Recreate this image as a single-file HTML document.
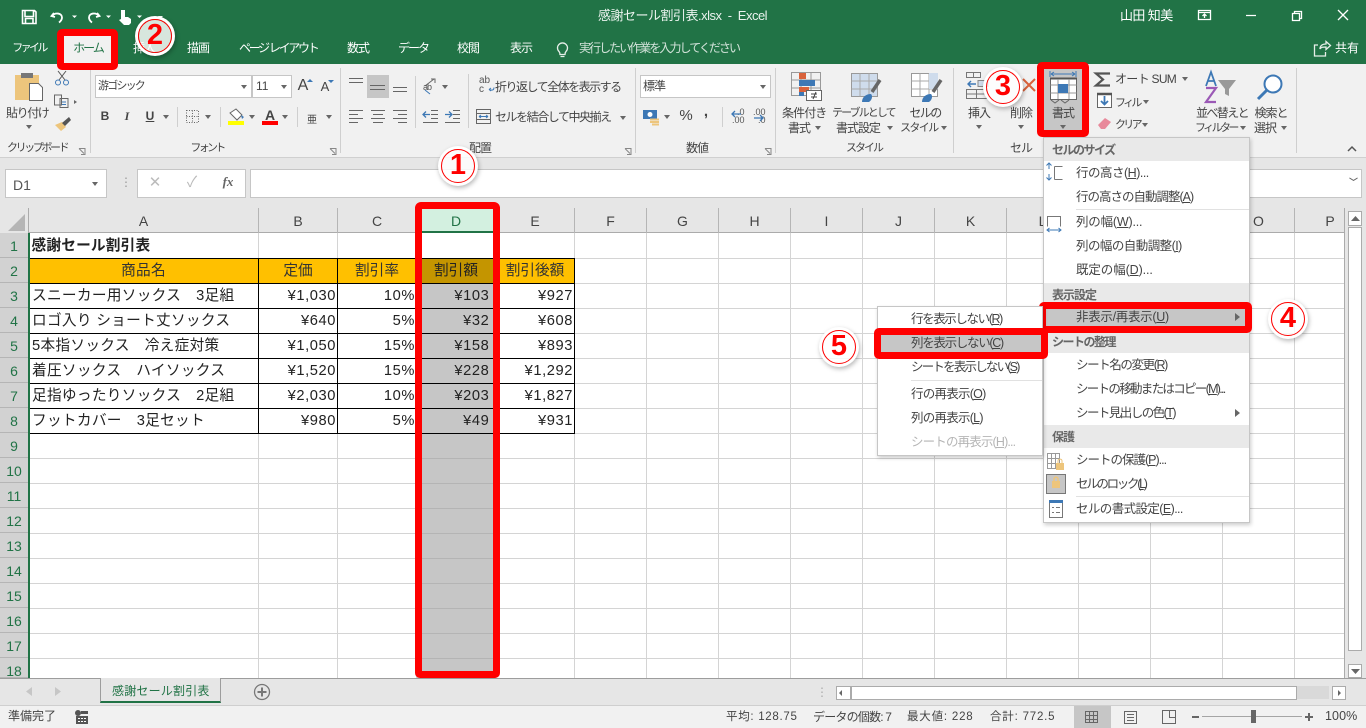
<!DOCTYPE html>
<html lang="ja"><head><meta charset="utf-8"><title>感謝セール割引表.xlsx - Excel</title>
<style>
html,body{margin:0;padding:0;width:1366px;height:728px;overflow:hidden;background:#e6e6e6}
body{position:relative;font-family:"Liberation Sans","Noto Sans CJK JP",sans-serif;font-size:12px;color:#444}
div,span,svg,table{position:absolute}
td span,u{position:static}
.t{white-space:nowrap;line-height:16px;letter-spacing:-1px}
.n{font-size:11px;letter-spacing:-2.6px}
.w{color:#fff}
.c{transform:translateX(-50%)}
.box{background:#fff;border:1px solid #c6c6c6;box-sizing:border-box}
.sep{width:1px;background:#cfcfcf}
.tri{width:0;height:0;border-left:3.5px solid transparent;border-right:3.5px solid transparent;border-top:4px solid #666}
.hd{left:1044px;width:205px;background:#e9e9e9;height:23px}
.mi{color:#444;font-size:12.5px}
.ch{top:208px;height:25px;line-height:26px;text-align:center;font-size:14px;color:#444;border-right:1px solid #b5b5b5;box-sizing:border-box}
.rh{left:0;width:28px;height:25px;line-height:26px;text-align:center;font-size:14px;color:#217346;background:#d2d2d2;border-bottom:1px solid #b5b5b5;box-sizing:border-box}
.red{border:7px solid #f00;border-radius:5px;box-sizing:border-box}
.num{width:34px;height:34px;border-radius:50%;border:1.5px solid #f00;box-sizing:border-box;background:rgba(255,255,255,.82);box-shadow:0 0 0 3px #fff,1px 2px 5px 3px rgba(0,0,0,.28);color:#f00;font-weight:bold;font-size:29px;line-height:31px;text-align:center}
table{left:28px;top:234px;border-collapse:collapse;table-layout:fixed;width:546px;font-size:14.67px;color:#222}
td{height:24px;padding:0 1px 0 3px;border:1px solid #000;white-space:nowrap;overflow:hidden;line-height:20px}
td:first-child{letter-spacing:.3px}
td.r{text-align:right;letter-spacing:.6px}
td.h{background:#ffc000;text-align:center;color:#333;padding:0}
td.g{background:#c6c6c6}
td.gh{background:#c49500;text-align:center;color:#222;padding:0}
</style></head><body>

<!-- title + tabs -->
<div style="left:0;top:0;width:1366px;height:64px;background:#217346"></div>
<span class="t w" style="left:598px;top:8px;font-size:13px;letter-spacing:-.5px;color:#eaf3ee">感謝セール割引表.xlsx&nbsp; -&nbsp; Excel</span>
<span class="t w" style="left:1120px;top:8px;font-size:13px;letter-spacing:-.6px">山田 知美</span>
<span class="t w c n" style="left:29px;top:40px">ファイル</span>
<div style="left:60px;top:34px;width:55px;height:30px;background:#f1f1f1"></div>
<span class="t c" style="left:88px;top:40px;color:#217346;letter-spacing:-2px">ホーム</span>
<span class="t w c" style="left:144px;top:40px">挿入</span>
<span class="t w c" style="left:198px;top:40px">描画</span>
<span class="t w" style="left:239px;top:40px;letter-spacing:-2.3px">ページ レイアウト</span>
<span class="t w c" style="left:358px;top:40px">数式</span>
<span class="t w" style="left:398px;top:40px;letter-spacing:-2px">データ</span>
<span class="t w c" style="left:468px;top:40px">校閲</span>
<span class="t w c" style="left:521px;top:40px">表示</span>
<span class="t" style="left:579px;top:40px;color:#d3e3da;letter-spacing:-1.95px">実行したい作業を入力してください</span>
<span class="t w" style="left:1335px;top:40px;letter-spacing:0">共有</span>
<svg style="left:0;top:0" width="1366" height="64" fill="none" stroke="#fff" stroke-width="1.3">
<path d="M22.5 10.5h12l1.5 1.5v11.5h-13.5zM25 10.5v6h8.5v-6M25.5 23v-4.500h7.500V23" stroke-width="1.600"/>
<path d="M54 13l-2.500 3 3.500 1M52 16c3-4 10-3 10 1.500 0 2-1 3.500-3 5" stroke-width="1.800"/>
<path d="M72 15.500h5l-2.500 2.500z" fill="#fff" stroke="none"/>
<path d="M97 13l2.500 3-3.500 1M99 16c-3-4-10-3-10 1.500 0 2 1 3.500 3 5" stroke-width="1.800"/>
<path d="M106 15.500h5l-2.500 2.500z" fill="#fff" stroke="none"/>
<path d="M121 10h4v7h3l3 2v4l-2 2h-5l-5-5 2-1z" fill="#fff" stroke="none"/>
<path d="M137 15.500h5l-2.500 2.500zM158 13.500h5M158 16h5l-2.500 2.500z" fill="#fff" stroke="none"/>
<path d="M1198.500 10.500h12v9h-12zM1198.500 12.500h12M1204.500 18v-4M1202.500 16l2-2 2 2"/>
<path d="M1246 15.500h10M1292.500 13.500h7v7h-7zM1294.500 13.500v-2h7v7h-2"/>
<path d="M1338 10l10 10M1348 10l-10 10"/>
<path d="M566 51.500a5 5 0 1 0-7 0c1 1 1 2 1 3h5c0-1 0-2 1-3zM560.500 56.500h4" stroke="#e7efe9"/>
<path d="M1318 45h-3.500v11h11v-4M1320 49c0-3 2-5 6-5v-2.500l4.500 4-4.500 4V47c-3 0-5 0-6 2z" stroke="#e7efe9"/>
</svg>

<!-- ribbon -->
<div style="left:0;top:64px;width:1366px;height:93px;background:#f1f1f1;border-bottom:1px solid #d0d0d0"></div>
<div class="sep" style="left:90px;top:68px;height:85px"></div>
<div class="sep" style="left:340px;top:68px;height:85px"></div>
<div class="sep" style="left:635px;top:68px;height:85px"></div>
<div class="sep" style="left:775px;top:68px;height:85px"></div>
<div class="sep" style="left:953px;top:68px;height:85px"></div>
<div class="sep" style="left:1296px;top:68px;height:85px"></div>
<div class="sep" style="left:177px;top:107px;height:20px"></div>
<div class="sep" style="left:220px;top:107px;height:20px"></div>
<div class="sep" style="left:297px;top:107px;height:20px"></div>
<div class="sep" style="left:415px;top:76px;height:52px"></div>
<div class="sep" style="left:468px;top:74px;height:54px"></div>
<div class="sep" style="left:722px;top:107px;height:20px"></div>

<span class="t" style="left:6px;top:105px;letter-spacing:-1.4px">貼り付け</span>
<div class="tri" style="left:26px;top:125px"></div>
<span class="t n" style="left:7px;top:140px;letter-spacing:-2.4px">クリップボード</span>
<span class="t c n" style="left:207px;top:140px;letter-spacing:-2.7px">フォント</span>
<span class="t c" style="left:480px;top:140px">配置</span>
<span class="t c" style="left:697px;top:140px">数値</span>
<span class="t c n" style="left:864px;top:140px;letter-spacing:-2px">スタイル</span>
<span class="t c" style="left:1021px;top:140px">セル</span>

<div class="box" style="left:95px;top:75px;width:157px;height:23px"></div>
<span class="t n" style="left:98px;top:78px;letter-spacing:-1.8px">游ゴシック</span>
<div class="tri" style="left:241px;top:85px"></div>
<div class="box" style="left:252px;top:75px;width:40px;height:23px"></div>
<span class="t" style="left:256px;top:78px;letter-spacing:0">11</span>
<div class="tri" style="left:281px;top:85px"></div>
<span class="t c" style="left:303px;top:78px;font-size:16px;letter-spacing:0">A</span>
<span class="t c" style="left:325px;top:79px;font-size:13px;letter-spacing:0">A</span>
<span class="t c" style="left:105px;top:108px;font-weight:bold;letter-spacing:0">B</span>
<span class="t c" style="left:127px;top:108px;font-style:italic;font-family:'Liberation Serif',serif;font-weight:bold;letter-spacing:0">I</span>
<span class="t c" style="left:150px;top:108px;font-weight:bold;letter-spacing:0"><u>U</u></span>
<div class="tri" style="left:163px;top:115px"></div>
<div class="tri" style="left:205px;top:115px"></div>
<div class="tri" style="left:249px;top:115px"></div>
<div class="tri" style="left:282px;top:115px"></div>
<div class="tri" style="left:326px;top:115px"></div>
<div style="left:228px;top:121px;width:16px;height:4px;background:#ff0"></div>
<div style="left:262px;top:121px;width:16px;height:4px;background:#f00"></div>
<span class="t c" style="left:270px;top:107px;font-weight:bold;font-size:14px;letter-spacing:0">A</span>
<span class="t c" style="left:312px;top:113px;font-size:10px;letter-spacing:0">亜</span>

<div style="left:367px;top:75px;width:22px;height:23px;background:#c6c6c6"></div>
<div class="tri" style="left:442px;top:85px"></div>
<span class="t" style="left:495px;top:79px;letter-spacing:-1.5px">折り返して全体を表示する</span>
<span class="t" style="left:495px;top:109px;letter-spacing:-1.45px">セルを結合して中央揃え</span>
<div class="tri" style="left:620px;top:116px"></div>

<div class="box" style="left:640px;top:75px;width:131px;height:23px"></div>
<span class="t" style="left:643px;top:78px">標準</span>
<div class="tri" style="left:760px;top:85px"></div>
<div class="tri" style="left:664px;top:115px"></div>
<span class="t c" style="left:686px;top:108px;font-size:15px;letter-spacing:0">%</span>
<span class="t c" style="left:706px;top:104px;font-size:15px;font-weight:bold;letter-spacing:0">,</span>
<span class="t" style="left:732px;top:108px;font-size:9px;line-height:8px;letter-spacing:0;width:20px;color:#555">&nbsp;&nbsp;.0<br>.00</span>
<span class="t" style="left:753px;top:108px;font-size:9px;line-height:8px;letter-spacing:0;width:20px;color:#555">.00<br>&nbsp;&nbsp;.0</span>

<span class="t" style="left:782px;top:105px;letter-spacing:-.9px">条件付き</span>
<span class="t" style="left:788px;top:120px">書式</span><div class="tri" style="left:815px;top:126px"></div>
<span class="t n" style="left:832px;top:105px;letter-spacing:-1.9px">テーブルとして</span>
<span class="t" style="left:836px;top:120px">書式設定</span><div class="tri" style="left:887px;top:126px"></div>
<span class="t c" style="left:925px;top:105px;letter-spacing:-1.6px">セルの</span>
<span class="t n" style="left:900px;top:120px;letter-spacing:-1.6px">スタイル</span><div class="tri" style="left:941px;top:126px"></div>

<span class="t c" style="left:979px;top:105px">挿入</span><div class="tri" style="left:976px;top:125px"></div>
<span class="t c" style="left:1021px;top:105px">削除</span><div class="tri" style="left:1018px;top:125px"></div>
<div style="left:1044px;top:69px;width:38px;height:61px;background:#c6c6c6"></div>
<span class="t c" style="left:1063px;top:105px">書式</span><div class="tri" style="left:1060px;top:125px"></div>
<span class="t" style="left:1115px;top:71px;letter-spacing:-.7px">オート SUM</span><div class="tri" style="left:1182px;top:77px"></div>
<span class="t n" style="left:1115px;top:95px;letter-spacing:-2.7px">フィル</span><div class="tri" style="left:1143px;top:100px"></div>
<span class="t n" style="left:1115px;top:117px;letter-spacing:-2.7px">クリア</span><div class="tri" style="left:1142px;top:123px"></div>
<span class="t" style="left:1196px;top:105px;letter-spacing:-1.6px">並べ替えと</span>
<span class="t n" style="left:1195px;top:120px;letter-spacing:-2.6px">フィルター</span><div class="tri" style="left:1240px;top:126px"></div>
<span class="t c" style="left:1271px;top:105px">検索と</span>
<span class="t" style="left:1254px;top:120px">選択</span><div class="tri" style="left:1281px;top:126px"></div>

<svg style="left:0;top:64px" width="1366" height="94" fill="none" stroke="#666" stroke-width="1">
<g transform="translate(0,-64)">
<!-- clipboard -->
<path d="M15 75h24v25H15z" fill="#edc57c" stroke="none"/><path d="M21 73h12v5H21z" fill="#777" stroke="none"/>
<path d="M29.500 83.500h9l4 4v13h-13z" fill="#fff"/>
<path d="M58 71l7 9M66 71l-7 9" stroke="#555"/><circle cx="58" cy="82.500" r="2.500" stroke="#3d78b5"/><circle cx="66" cy="82.500" r="2.500" stroke="#3d78b5"/>
<path d="M54.500 95h7v10h-7zM60 98.500h8v9h-8z" fill="#f1f1f1"/><path d="M62 102h4M62 104.500h4" stroke="#3d78b5"/>
<path d="M74 100l3 2-3 2z" fill="#666" stroke="none"/>
<path d="M55 125l7-3 4 5-5 4z" fill="#edc57c" stroke="none"/><path d="M62 123l7-6 2 3-6 6z" fill="#555" stroke="none"/>
<path d="M79 148.500h6v6M81 154.500h4v-4M79 148.500l5 5" stroke="#888"/>
<path d="M330 148.500h6v6M332 154.500h4v-4M330 148.500l5 5" stroke="#888"/>
<path d="M625 148.500h6v6M627 154.500h4v-4M625 148.500l5 5" stroke="#888"/>
<path d="M765 148.500h6v6M767 154.500h4v-4M765 148.500l5 5" stroke="#888"/>
<!-- grow/shrink -->
<path d="M307 82l3-3 3 3z" fill="#3d78b5" stroke="none"/><path d="M328 80h6l-3 3z" fill="#3d78b5" stroke="none"/>
<!-- borders -->
<path d="M186.500 110.500h12v12h-12zM192.500 110.500v12M186.500 116.500h12" stroke-dasharray="1 1.500"/>
<!-- fill -->
<path d="M230 113l6-4 6 6-5 5z" fill="#fff"/><path d="M241 115l3 2-2 2z" fill="#3d78b5" stroke="none"/>
<!-- align -->
<path d="M349 78.500h14M349 82.500h14M370 85.500h15M370 89.500h15M393 87.500h14M393 91.500h14"/>
<path d="M349 110.500h14M349 114.500h9M349 118.500h14M349 122.500h9M371 110.500h14M373 114.500h10M371 118.500h14M373 122.500h10M393 110.500h14M398 114.500h9M393 118.500h14M398 122.500h9"/>
<path d="M425 86l9-7M431 79h4v4"/><path d="M425 90l5 4" stroke="#3d78b5"/>
<path d="M431 110.500h7M431 114.500h7M431 118.500h7M423 122.500h15M453 110.500h7M453 114.500h7M453 118.500h7M445 122.500h15" />
<path d="M423 114.500h7M426 111.500l-3 3 3 3M445 114.500h7M449 111.500l3 3-3 3" stroke="#3d78b5" stroke-width="1.300"/>
<!-- abc / merge -->
<path d="M489 89.500c4 1.500 5 0 5-2M489 89.500l2-1.500M489 89.500l2 1.500" stroke="#3d78b5"/>
<path d="M476.500 109.500h14v14h-14zM476.500 113.500h14M476.500 119.500h14" /><path d="M479 116.500h9M479 116.500l2-1.500M479 116.500l2 1.500M488 116.500l-2-1.500M488 116.500l-2 1.500" stroke="#3d78b5"/>
<!-- currency -->
<path d="M643 110h14v9h-14z" fill="#3d78b5" stroke="none"/><circle cx="650" cy="114.500" r="2.500" fill="#fff" stroke="none"/>
<path d="M650 119.500h9M650 122h9M652 124.500h7" stroke="#edc57c" stroke-width="2"/>
<path d="M732 114h9M735 111l-3 3 3 3M754 118h9M760 115l3 3-3 3" stroke="#3d78b5" stroke-width="1.300"/>
<!-- cond -->
<path d="M791.500 72.500h29v23h-29zM801 72.500v23M811 72.500v23M791.500 80h29M791.500 88h29" stroke="#999"/>
<path d="M799 73h7v6h-7z" fill="#d9623b" stroke="none"/><path d="M799 80h16v6h-16z" fill="#3d78b5" stroke="none"/><path d="M799 87h10v5h-10z" fill="#d9623b" stroke="none"/><path d="M799 92h5v4h-5z" fill="#3d78b5" stroke="none"/>
<path d="M806.500 90.500h15v10h-15z" fill="#fff"/><path d="M811 94h6M811 97h6M816 92l-3 7" stroke="#444"/>
<!-- table -->
<path d="M851.500 73.500h26v23h-26z" fill="#cfdcec" stroke="#999"/><path d="M860 73.500v23M869 73.500v23M851.500 81h26M851.500 89h26" stroke="#aaa"/>
<path d="M880 80l-8 12" stroke="#666" stroke-width="3.500"/><path d="M862 102c0-5 4-8 9-8 2 2 1 6-2 8z" fill="#3d78b5" stroke="none"/>
<!-- cell style -->
<path d="M911.500 73.500h26v23h-26z" fill="#fff" stroke="#999"/><path d="M911.500 81h26M911.500 89h26M920 73.500v23M929 73.500v23" stroke="#aaa"/>
<path d="M929 73h9v16h-9z" fill="#cfdcec" stroke="none"/><path d="M941 80l-8 12" stroke="#666" stroke-width="3.500"/><path d="M922 102c0-5 4-8 9-8 2 2 1 6-2 8z" fill="#3d78b5" stroke="none"/>
<!-- insert -->
<path d="M966.500 72.500h14v5h-14zM973.500 72.500v5M966.500 89.500h20v9h-20zM976.500 89.500v9M966.500 94h20" stroke="#777"/>
<path d="M978 80.500h10v6h-10z" fill="#cfdcec" stroke="#888"/><path d="M968 84h8M971 81l-3 3 3 3" stroke="#3d78b5" stroke-width="1.400"/>
<!-- delete -->
<path d="M1023 79l12 12M1035 79l-12 12" stroke="#d9623b" stroke-width="2"/>
<!-- format -->
<path d="M1050 71v6M1076 71v6M1051 74h24M1051 74l3-2M1051 74l3 2M1075 74l-3-2M1075 74l-3 2" stroke="#3d78b5"/>
<path d="M1050.500 78.500h26v21h-26z" fill="#fff" stroke="#666"/><path d="M1050 78.500h27" stroke="#555" stroke-width="2"/>
<path d="M1058 79v20M1069 79v20M1050.500 85h26M1050.500 93h26" stroke="#999"/><path d="M1058 84h10v9h-10z" fill="#3d78b5" stroke="none"/>
<path d="M1051 100l4 3 4-3M1061 100l4 3 4-3" stroke="#666"/>
<!-- sum -->
<path d="M1110 73.500h-14l7 6-7 6h14" stroke="#555" stroke-width="2.200"/>
<path d="M1097.500 93.500h14v14h-14z" fill="#fff" stroke="#666"/><path d="M1097 94h15" stroke="#555" stroke-width="2.500"/>
<path d="M1104.500 96v8M1101 101l3.500 3.500 3.500-3.500" stroke="#3d78b5" stroke-width="1.800"/>
<path d="M1098 125l7-7 6 4-6 7h-4z" fill="#e8899b" stroke="none"/>
<!-- sort -->
<path d="M1218 80h18l-7 9v7l-4-2v-5z" fill="#999" stroke="none"/>
<path d="M1206 88h10l-10 14h10" stroke="#9b59b6" stroke-width="2.200"/>
<path d="M1206 86l5-14 5 14M1208 81h6" stroke="#3d78b5" stroke-width="1.800"/>
<!-- find -->
<circle cx="1273" cy="84" r="8.500" stroke="#3d78b5" stroke-width="2" fill="#fff"/><path d="M1267 90l-9 9" stroke="#3d78b5" stroke-width="3"/>
<path d="M1348 151l4-4 4 4" stroke="#555" stroke-width="1.500"/>
</g></svg>
<span class="t" style="left:479px;top:76px;font-size:10px;line-height:9px;letter-spacing:0;color:#555;width:14px">ab<br>c</span>
<span class="t" style="left:423px;top:79px;font-size:9px;letter-spacing:-1px;color:#555">ab</span>

<!-- formula bar -->
<div class="box" style="left:5px;top:169px;width:102px;height:29px"></div>
<span class="t" style="left:13px;top:177px;font-size:14px;letter-spacing:0;color:#555">D1</span>
<div class="tri" style="left:92px;top:182px"></div>
<span class="t" style="left:120px;top:174px;color:#999;letter-spacing:0">⋮</span>
<div class="box" style="left:137px;top:169px;width:109px;height:29px"></div>
<span class="t c" style="left:155px;top:175px;font-size:15px;letter-spacing:0;color:#bbb">✕</span>
<span class="t c" style="left:192px;top:175px;font-size:15px;letter-spacing:0;color:#bbb">✓</span>
<span class="t c" style="left:228px;top:174px;font-size:13px;letter-spacing:0;font-family:'Liberation Serif',serif;font-style:italic;font-weight:bold;color:#666">fx</span>
<div class="box" style="left:250px;top:169px;width:1112px;height:29px"></div>
<span class="t" style="left:1349px;top:174px;font-size:9px;letter-spacing:0;color:#666;font-weight:bold">﹀</span>

<!-- sheet -->
<div style="left:0;top:208px;width:1345px;height:25px;background:#e6e6e6;border-bottom:1px solid #ababab;box-sizing:border-box"></div>
<div style="left:29px;top:233px;width:1316px;height:445px;background:#fff"></div>
<svg style="left:28px;top:233px" width="1317" height="445" stroke="#d4d4d4" stroke-width="1" shape-rendering="crispEdges">
<path d="M230.500 0v445M309.500 0v445M388.500 0v445M467.500 0v445M546.500 0v445M618.500 0v445M690.500 0v445M762.500 0v445M834.500 0v445M906.500 0v445M978.500 0v445M1050.500 0v445M1122.500 0v445M1194.500 0v445M1266.500 0v445M1316.500 0v445"/>
<path d="M0 25.500h1317M0 50.500h1317M0 75.500h1317M0 100.500h1317M0 125.500h1317M0 150.500h1317M0 175.500h1317M0 200.500h1317M0 225.500h1317M0 250.500h1317M0 275.500h1317M0 300.500h1317M0 325.500h1317M0 350.500h1317M0 375.500h1317M0 400.500h1317M0 425.500h1317"/>
</svg>
<div class="ch" style="left:29px;width:230px">A</div>
<div class="ch" style="left:259px;width:79px">B</div>
<div class="ch" style="left:338px;width:79px">C</div>
<div class="ch" style="left:417px;width:79px;background:#d3f0e0;color:#217346;border-bottom:2px solid #217346">D</div>
<div class="ch" style="left:496px;width:79px">E</div>
<div class="ch" style="left:575px;width:72px">F</div>
<div class="ch" style="left:647px;width:72px">G</div>
<div class="ch" style="left:719px;width:72px">H</div>
<div class="ch" style="left:791px;width:72px">I</div>
<div class="ch" style="left:863px;width:72px">J</div>
<div class="ch" style="left:935px;width:72px">K</div>
<div class="ch" style="left:1007px;width:72px">L</div>
<div class="ch" style="left:1079px;width:72px">M</div>
<div class="ch" style="left:1151px;width:72px">N</div>
<div class="ch" style="left:1223px;width:72px">O</div>
<div class="ch" style="left:1295px;width:50px;text-indent:20px;border-right:0">P</div>
<div style="left:0;top:208px;width:28px;height:25px;background:#e6e6e6;border-right:1px solid #ababab"></div>
<svg style="left:7px;top:214px" width="20" height="18"><path d="M18 0v17H1z" fill="#b5b5b5"/></svg>

<div class="rh" style="top:233px">1</div><div class="rh" style="top:258px">2</div><div class="rh" style="top:283px">3</div><div class="rh" style="top:308px">4</div><div class="rh" style="top:333px">5</div><div class="rh" style="top:358px">6</div><div class="rh" style="top:383px">7</div><div class="rh" style="top:408px">8</div><div class="rh" style="top:433px">9</div><div class="rh" style="top:458px">10</div><div class="rh" style="top:483px">11</div><div class="rh" style="top:508px">12</div><div class="rh" style="top:533px">13</div><div class="rh" style="top:558px">14</div><div class="rh" style="top:583px">15</div><div class="rh" style="top:608px">16</div><div class="rh" style="top:633px">17</div><div class="rh" style="top:658px;height:20px">18</div>

<div style="left:417px;top:258px;width:79px;height:420px;background:#c6c6c6"></div>
<svg style="left:417px;top:258px" width="79" height="420" stroke="#b4b4b4" shape-rendering="crispEdges"><path d="M0 200.500h79M0 225.500h79M0 250.500h79M0 275.500h79M0 300.500h79M0 325.500h79M0 350.500h79M0 375.500h79M0 400.500h79"/></svg>

<table>
<colgroup><col style="width:230px"><col style="width:79px"><col style="width:79px"><col style="width:79px"><col style="width:79px"></colgroup>
<tr><td style="border:0;border-bottom:1px solid #000;font-weight:bold;letter-spacing:.2px;overflow:visible" colspan="5">感謝セール割引表</td></tr>
<tr><td class="h">商品名</td><td class="h">定価</td><td class="h">割引率</td><td class="gh">割引額</td><td class="h">割引後額</td></tr>
<tr><td>スニーカー用ソックス　3足組</td><td class="r">¥1,030</td><td class="r">10%</td><td class="r g">¥103&nbsp;</td><td class="r">¥927</td></tr>
<tr><td>ロゴ入り ショート丈ソックス</td><td class="r">¥640</td><td class="r">5%</td><td class="r g">¥32&nbsp;</td><td class="r">¥608</td></tr>
<tr><td>5本指ソックス　冷え症対策</td><td class="r">¥1,050</td><td class="r">15%</td><td class="r g">¥158&nbsp;</td><td class="r">¥893</td></tr>
<tr><td>着圧ソックス　ハイソックス</td><td class="r">¥1,520</td><td class="r">15%</td><td class="r g">¥228&nbsp;</td><td class="r">¥1,292</td></tr>
<tr><td>足指ゆったりソックス　2足組</td><td class="r">¥2,030</td><td class="r">10%</td><td class="r g">¥203&nbsp;</td><td class="r">¥1,827</td></tr>
<tr><td>フットカバー　3足セット</td><td class="r">¥980</td><td class="r">5%</td><td class="r g">¥49&nbsp;</td><td class="r">¥931</td></tr>
</table>
<div style="left:28px;top:233px;width:2px;height:445px;background:#217346"></div>

<!-- right scrollbar -->
<div style="left:1344px;top:208px;width:1px;height:470px;background:#ababab"></div>
<div style="left:1345px;top:199px;width:21px;height:479px;background:#e6e6e6"></div>
<div class="box" style="left:1348px;top:211px;width:14px;height:15px;border-color:#ababab"></div>
<svg style="left:1351px;top:216px" width="9" height="5"><path d="M0 5l4.500-5 4.500 5z" fill="#666"/></svg>
<div class="box" style="left:1348px;top:227px;width:14px;height:424px;border-color:#ababab"></div>
<div class="box" style="left:1348px;top:664px;width:14px;height:14px;border-color:#ababab"></div>
<svg style="left:1351px;top:669px" width="9" height="5"><path d="M0 0l4.500 5 4.500-5z" fill="#666"/></svg>

<!-- tabs bar -->
<div style="left:0;top:678px;width:1366px;height:28px;background:#e6e6e6;border-top:1px solid #9d9d9d;border-bottom:1px solid #cfcfcf;box-sizing:border-box"></div>
<svg style="left:26px;top:686px" width="36" height="11" fill="#c6c6c6"><path d="M6 1v9L0 5.500zM29 1v9l6-4.500z"/></svg>
<div style="left:100px;top:678px;width:121px;height:25px;background:#e6e6e6;border:1px solid #9d9d9d;border-top:0;border-bottom:2px solid #217346;box-sizing:border-box"></div>
<span class="t" style="left:112px;top:683px;color:#217346;letter-spacing:.2px">感謝セール割引表</span>
<svg style="left:253px;top:683px" width="18" height="18" fill="none" stroke="#777"><circle cx="9" cy="9" r="7.500" stroke-width="1.300"/><path d="M4.500 9h9M9 4.500v9" stroke-width="2"/></svg>
<span class="t" style="left:816px;top:684px;color:#aaa;letter-spacing:0">⋮</span>
<div style="left:851px;top:686px;width:478px;height:13px;background:#d9d9d9"></div>
<div class="box" style="left:836px;top:686px;width:15px;height:14px;border-color:#ababab"></div>
<div class="box" style="left:851px;top:686px;width:446px;height:14px;border-color:#ababab"></div>
<div class="box" style="left:1332px;top:686px;width:14px;height:14px;border-color:#ababab"></div>
<svg style="left:836px;top:686px" width="510" height="14" fill="#666"><path d="M6 4v6L3 7zM502 4v6l3-3z"/></svg>

<!-- status bar -->
<div style="left:0;top:706px;width:1366px;height:22px;background:#f1f1f1"></div>
<span class="t" style="left:8px;top:708px;letter-spacing:0">準備完了</span>
<svg style="left:75px;top:710px" width="14" height="14" fill="#555"><circle cx="3" cy="3" r="3"/><path d="M1 6h12v8H1zM6 1h7v3H6z"/><path d="M3 8h2v1H3zM6 8h2v1H6zM9 8h2v1H9zM3 11h2v1H3zM6 11h2v1H6zM9 11h2v1H9z" fill="#fff"/></svg>
<span class="t" style="left:726px;top:709px;letter-spacing:.7px;font-size:11.500px">平均: 128.75</span>
<span class="t" style="left:813px;top:709px;letter-spacing:-.8px">データの個数: 7</span>
<span class="t" style="left:907px;top:709px;letter-spacing:.8px;font-size:11.500px">最大値: 228</span>
<span class="t" style="left:990px;top:709px;letter-spacing:.8px;font-size:11.500px">合計: 772.5</span>
<div style="left:1074px;top:706px;width:37px;height:22px;background:#c6c6c6"></div>
<svg style="left:1085px;top:709px" width="95" height="16" fill="none" stroke="#666" shape-rendering="crispEdges"><path d="M.5 2.500h12v11H.5zM4.500 2.500v11M8.500 2.500v11M.5 6.500h12M.5 10.500h12"/><path d="M39.500 2.500h12v12h-12zM42 5.500h7M42 8.500h7M42 11.500h7"/><path d="M77.500 1.500h13v13h-13zM84.500 1.500v7h6"/></svg>
<div style="left:1192px;top:716px;width:7px;height:2px;background:#666"></div>
<div style="left:1202px;top:716px;width:100px;height:1px;background:#a5a5a5"></div>
<div style="left:1251px;top:710px;width:5px;height:13px;background:#666"></div>
<div style="left:1305px;top:716px;width:8px;height:2px;background:#666"></div>
<div style="left:1308px;top:713px;width:2px;height:8px;background:#666"></div>
<span class="t" style="left:1325px;top:708px;letter-spacing:.1px;font-size:12.500px">100%</span>

<!-- red frames below menu -->
<div class="red" style="left:415px;top:202px;width:85px;height:476px;border-radius:6px 6px 5px 5px"></div>
<div class="red" style="left:57px;top:29px;width:61px;height:41px"></div>
<div class="red" style="left:1037px;top:62px;width:52px;height:75px"></div>

<!-- main menu -->
<div style="left:1043px;top:137px;width:207px;height:386px;background:#fff;border:1px solid #c6c6c6;box-sizing:border-box;box-shadow:1px 2px 4px rgba(0,0,0,.2)"></div>
<div class="hd" style="top:138px"></div>
<div class="hd" style="top:283px"></div>
<div class="hd" style="top:330px"></div>
<div class="hd" style="top:425px"></div>
<div style="left:1076px;top:209px;width:173px;height:1px;background:#e1e1e1"></div>
<div style="left:1076px;top:496px;width:173px;height:1px;background:#e1e1e1"></div>
<span class="t" style="left:1052px;top:142px;font-weight:bold;color:#666;letter-spacing:-1.5px">セルのサイズ</span>
<span class="t mi" style="left:1076px;top:165px;letter-spacing:-.5px">行の高さ(<u>H</u>)...</span>
<span class="t mi" style="left:1076px;top:189px">行の高さの自動調整(<u>A</u>)</span>
<span class="t mi" style="left:1076px;top:214px;letter-spacing:-.2px">列の幅(<u>W</u>)...</span>
<span class="t mi" style="left:1076px;top:238px;letter-spacing:-.55px">列の幅の自動調整(<u>I</u>)</span>
<span class="t mi" style="left:1076px;top:262px;letter-spacing:-.1px">既定の幅(<u>D</u>)...</span>
<span class="t" style="left:1052px;top:287px;font-weight:bold;color:#666">表示設定</span>
<span class="t" style="left:1052px;top:334px;font-weight:bold;color:#666;letter-spacing:-1.5px">シートの整理</span>
<span class="t mi" style="left:1076px;top:357px;letter-spacing:-1.4px">シート名の変更(<u>R</u>)</span>
<span class="t mi" style="left:1076px;top:381px;letter-spacing:-1.7px">シートの移動またはコピー(<u>M</u>)...</span>
<span class="t mi" style="left:1076px;top:405px;letter-spacing:-1.55px">シート見出しの色(<u>T</u>)</span>
<span class="t" style="left:1052px;top:429px;font-weight:bold;color:#666">保護</span>
<span class="t mi" style="left:1076px;top:452px">シートの保護(<u>P</u>)...</span>
<span class="t mi" style="left:1076px;top:476px;letter-spacing:-2.3px">セルのロック(<u>L</u>)</span>
<span class="t mi" style="left:1076px;top:501px;letter-spacing:-.6px">セルの書式設定(<u>E</u>)...</span>
<div style="left:1046px;top:474px;width:20px;height:20px;background:#c6c6c6;border:1px solid #777;box-sizing:border-box"></div>
<svg style="left:1044px;top:160px" width="40" height="360" fill="none" stroke="#777" shape-rendering="geometricPrecision">
<path d="M10.500 6.500h8M10.500 19.500h8M10.500 6.500v13"/><path d="M2.500 5.500l2.500-2.500 2.500 2.500M5 3v6M5 14v6M2.500 17.500l2.500 2.500 2.500-2.500" stroke="#3d78b5"/>
<path d="M3.500 66.500v-10h13v10"/><path d="M3 70h14M5.500 68l-2.500 2 2.500 2M14.500 68l2.500 2-2.500 2" stroke="#3d78b5"/>
<path d="M3.500 293.500h12v15h-12zM7.500 293.500v15M11.500 293.500v15M3.500 298.500h12M3.500 303.500h12" stroke="#999"/><path d="M12 303h8v7h-8z" fill="#edc57c" stroke="none"/><path d="M14 303v-2c0-2.500 4-2.500 4 0v2" stroke="#edc57c"/>
<path d="M8 321h8v7H8z" fill="#edc57c" stroke="none"/><path d="M10 321v-2c0-2.500 4-2.500 4 0v2" stroke="#edc57c" stroke-width="1.500"/>
<path d="M5.500 342.500h13v15h-13zM8 347.500h2M8 352.500h2M12 347.500h4M12 352.500h4"/><path d="M5 340h14v3H5z" fill="#3d78b5" stroke="none"/>
</svg>
<svg style="left:1235px;top:409px" width="6" height="8"><path d="M0 0l5 4-5 4z" fill="#666"/></svg>

<!-- hide submenu highlighted -->
<div style="left:1046px;top:309px;width:199px;height:17px;background:#c6c6c6"></div>
<div class="red" style="left:1039px;top:302px;width:213px;height:31px"></div>
<span class="t mi" style="left:1076px;top:309px;letter-spacing:-.3px">非表示/再表示(<u>U</u>)</span>
<svg style="left:1235px;top:313px" width="6" height="8"><path d="M0 0l5 4-5 4z" fill="#666"/></svg>

<!-- submenu -->
<div style="left:877px;top:306px;width:166px;height:150px;background:#fff;border:1px solid #c6c6c6;box-sizing:border-box;box-shadow:1px 2px 4px rgba(0,0,0,.2)"></div>
<div style="left:911px;top:380px;width:131px;height:1px;background:#e1e1e1"></div>
<span class="t mi" style="left:911px;top:311px;letter-spacing:-1.4px">行を表示しない(<u>R</u>)</span>
<div style="left:881px;top:335px;width:160px;height:17px;background:#c6c6c6"></div>
<span class="t mi" style="left:911px;top:335px;letter-spacing:-1.3px">列を表示しない(<u>C</u>)</span>
<span class="t mi" style="left:911px;top:359px;letter-spacing:-1.8px">シートを表示しない(<u>S</u>)</span>
<span class="t mi" style="left:911px;top:386px;letter-spacing:-.75px">行の再表示(<u>O</u>)</span>
<span class="t mi" style="left:911px;top:410px;letter-spacing:-.75px">列の再表示(<u>L</u>)</span>
<span class="t mi" style="left:911px;top:434px;color:#b5b5b5;letter-spacing:-.85px">シートの再表示(<u>H</u>)...</span>
<div class="red" style="left:874px;top:328px;width:174px;height:31px"></div>

<!-- numbered circles -->
<div class="num" style="left:441px;top:149px">1</div>
<div class="num" style="left:138px;top:19px">2</div>
<div class="num" style="left:986px;top:70px">3</div>
<div class="num" style="left:1271px;top:302px">4</div>
<div class="num" style="left:822px;top:330px">5</div>
</body></html>
